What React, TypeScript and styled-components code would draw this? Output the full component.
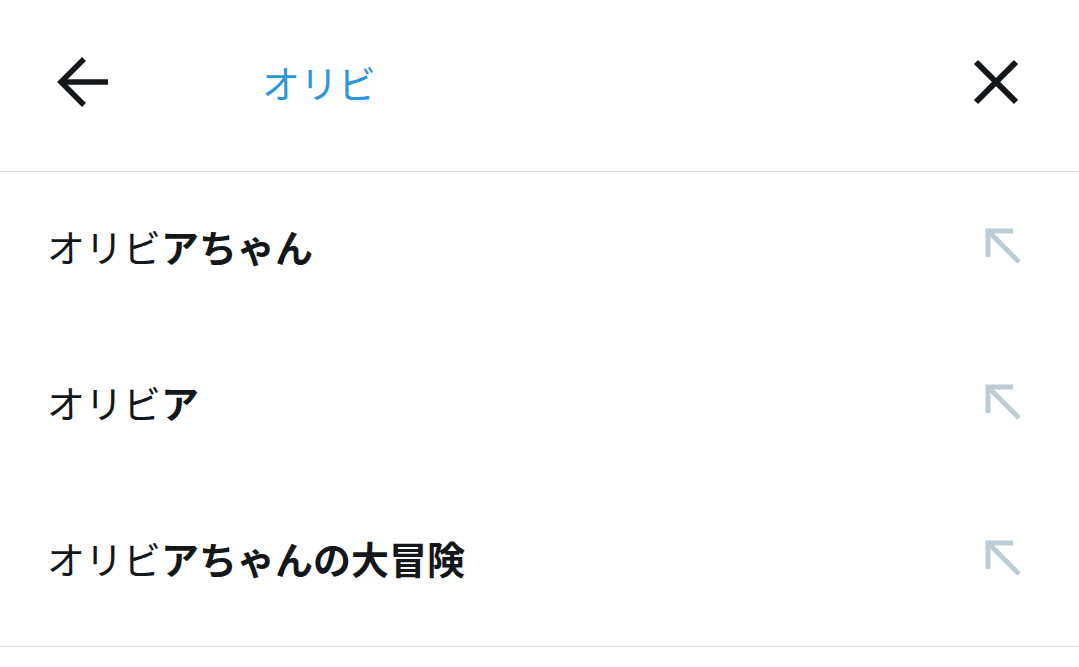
import React from "react";
import styled, { createGlobalStyle } from "styled-components";

const Global = createGlobalStyle`
  html, body { margin: 0; padding: 0; background: #ffffff; }
  body { font-family: "Noto Sans CJK JP", "Noto Sans", sans-serif; color: #14171a; }
`;

const Page = styled.div`
  width: 1079px;
  min-height: 667px;
  background: #fff;
`;

const Header = styled.header`
  border-bottom: 1px solid #d6dbdd;
  display: flex;
  align-items: center;
  padding: 0 60px 8px 57px;
  box-sizing: border-box;
  height: 172px;
`;

const IconButton = styled.button`
  border: 0;
  background: none;
  padding: 0;
  display: flex;
  align-items: center;
  justify-content: center;
  cursor: pointer;
`;

const Query = styled.div`
  flex: 1;
  margin-left: 153px;
  font-size: 38px;
  line-height: 1;
  color: #2b96d9;
  padding-top: 1px;
`;

const List = styled.ul`
  list-style: none;
  margin: 0;
  padding: 0 0 6px 0;
  border-bottom: 1px solid #d6dbdd;
`;

const Row = styled.li`
  height: 156px;
  box-sizing: border-box;
  padding: 0 58px 8px 47px;
  display: flex;
  align-items: center;
  justify-content: space-between;
`;

const Suggestion = styled.span`
  font-size: 38px;
  line-height: 1;
  color: #14171a;
`;

const Bold = styled.b`
  font-weight: 700;
`;

const BackIcon = () => (
  <svg width="52" height="52" viewBox="0 0 52 52" fill="none" stroke="#14171a" strokeWidth="5.5" strokeLinecap="butt">
    <line x1="5" y1="26" x2="51" y2="26" />
    <polyline points="27,3 4,26 27,49" />
  </svg>
);

const CloseIcon = () => (
  <svg width="46" height="46" viewBox="0 0 46 46" fill="none" stroke="#14171a" strokeWidth="6">
    <line x1="3" y1="3" x2="43" y2="43" />
    <line x1="43" y1="3" x2="3" y2="43" />
  </svg>
);

const FillIcon = () => (
  <svg width="36" height="36" viewBox="0 0 36 36" fill="none" stroke="#bccbd4" strokeWidth="5">
    <polyline points="3,29 3,3 28,3" />
    <line x1="3" y1="3" x2="34" y2="34" />
  </svg>
);

const items: { plain: string; bold: string }[] = [
  { plain: "オリビ", bold: "アちゃん" },
  { plain: "オリビ", bold: "ア" },
  { plain: "オリビ", bold: "アちゃんの大冒険" },
];

export default function App() {
  return (
    <Page>
      <Global />
      <Header>
        <IconButton aria-label="戻る">
          <BackIcon />
        </IconButton>
        <Query>オリビ</Query>
        <IconButton aria-label="閉じる">
          <CloseIcon />
        </IconButton>
      </Header>
      <List>
        {items.map((it, i) => (
          <Row key={i}>
            <Suggestion>
              {it.plain}
              <Bold>{it.bold}</Bold>
            </Suggestion>
            <FillIcon />
          </Row>
        ))}
      </List>
    </Page>
  );
}
